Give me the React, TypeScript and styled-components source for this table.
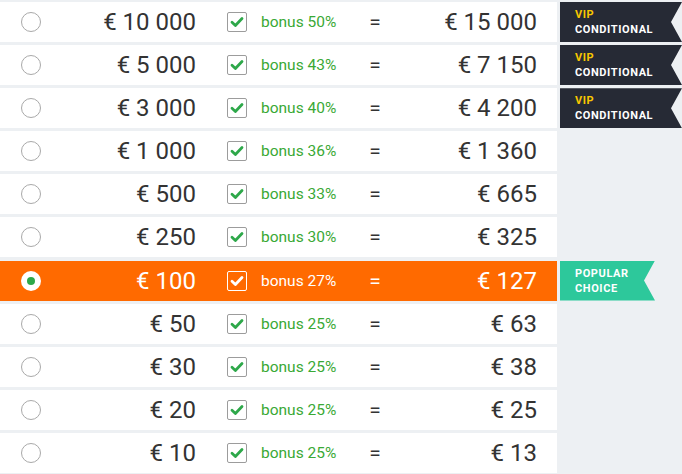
import React from "react";
import styled, { createGlobalStyle } from "styled-components";

const GlobalStyle = createGlobalStyle`
  html, body { margin: 0; padding: 0; background: #edf0f3; }
  body { font-family: Roboto, "Liberation Sans", Arial, sans-serif; }
`;

type Option = { amount: string; bonus: number; total: string; badge?: "vip" | "popular" };

const options: Option[] = [
  { amount: "€ 10 000", bonus: 50, total: "€ 15 000", badge: "vip" },
  { amount: "€ 5 000", bonus: 43, total: "€ 7 150", badge: "vip" },
  { amount: "€ 3 000", bonus: 40, total: "€ 4 200", badge: "vip" },
  { amount: "€ 1 000", bonus: 36, total: "€ 1 360" },
  { amount: "€ 500", bonus: 33, total: "€ 665" },
  { amount: "€ 250", bonus: 30, total: "€ 325" },
  { amount: "€ 100", bonus: 27, total: "€ 127", badge: "popular" },
  { amount: "€ 50", bonus: 25, total: "€ 63" },
  { amount: "€ 30", bonus: 25, total: "€ 38" },
  { amount: "€ 20", bonus: 25, total: "€ 25" },
  { amount: "€ 10", bonus: 25, total: "€ 13" },
];

const Table = styled.div`
  display: grid;
  grid-template-columns: 557px 1fr;
  grid-auto-rows: 40px;
  column-gap: 3px;
  row-gap: 3.1px;
  padding-top: 2px;
  width: 682px;
`;

const Row = styled.div<{ $active: boolean }>`
  grid-column: 1;
  display: flex;
  align-items: center;
  padding-left: 21px;
  background: ${(p) => (p.$active ? "#ff6a00" : "#ffffff")};
  color: ${(p) => (p.$active ? "#ffffff" : "#333333")};
`;

const Radio = styled.span<{ $active: boolean }>`
  flex: 0 0 auto;
  width: 20px;
  height: 20px;
  box-sizing: border-box;
  border-radius: 50%;
  background: #ffffff;
  border: ${(p) => (p.$active ? "none" : "1px solid #a9a9a9")};
  display: flex;
  align-items: center;
  justify-content: center;
  &::after {
    content: "";
    display: ${(p) => (p.$active ? "block" : "none")};
    width: 8px;
    height: 8px;
    border-radius: 50%;
    background: #2ea84a;
  }
`;

const Amount = styled.span`
  flex: 0 0 155px;
  text-align: right;
  font-size: 24px;
  line-height: 1;
`;

const Check = styled.span<{ $active: boolean }>`
  flex: 0 0 auto;
  margin-left: 31px;
  width: 20px;
  height: 20px;
  box-sizing: border-box;
  border-radius: 2px;
  border: 1px solid ${(p) => (p.$active ? "#ffffff" : "#9c9c9c")};
  background: ${(p) => (p.$active ? "transparent" : "#ffffff")};
  color: ${(p) => (p.$active ? "#ffffff" : "#2ea84a")};
  display: flex;
  align-items: center;
  justify-content: center;
  svg { display: block; }
`;

const Bonus = styled.span<{ $active: boolean }>`
  flex: 0 0 100px;
  margin-left: 14px;
  font-size: 15.5px;
  color: ${(p) => (p.$active ? "#ffffff" : "#3aa935")};
`;

const Equals = styled.span`
  flex: 0 0 28px;
  text-align: center;
  font-size: 21px;
`;

const Total = styled.span`
  flex: 0 0 148px;
  text-align: right;
  font-size: 24px;
  line-height: 1;
`;

const Badge = styled.div<{ $kind: "vip" | "popular" }>`
  grid-column: 2;
  display: flex;
  flex-direction: column;
  justify-content: center;
  padding-left: 15px;
  width: ${(p) => (p.$kind === "vip" ? "122px" : "95px")};
  box-sizing: border-box;
  background: ${(p) => (p.$kind === "vip" ? "#262a35" : "#2dc89b")};
  clip-path: polygon(0 0, 100% 0, calc(100% - 11px) 50%, 100% 100%, 0 100%);
  font-size: 11px;
  font-weight: 700;
  letter-spacing: 0.6px;
  line-height: 15px;
  color: #ffffff;
`;

const Vip = styled.span`
  color: #f7c600;
`;

const CheckIcon = () => (
  <svg width="14" height="12" viewBox="0 0 14 12">
    <path d="M2 6.2 L5.4 9.4 L12 2.6" fill="none" stroke="currentColor" strokeWidth="2.8" strokeLinecap="round" strokeLinejoin="round" />
  </svg>
);

export default function App() {
  return (
    <>
      <GlobalStyle />
      <Table>
        {options.map((o, i) => {
          const active = o.badge === "popular";
          return (
            <React.Fragment key={i}>
              <Row $active={active} style={{ gridRow: i + 1 }}>
                <Radio $active={active} />
                <Amount>{o.amount}</Amount>
                <Check $active={active}>
                  <CheckIcon />
                </Check>
                <Bonus $active={active}>bonus {o.bonus}%</Bonus>
                <Equals>=</Equals>
                <Total>{o.total}</Total>
              </Row>
              {o.badge === "vip" && (
                <Badge $kind="vip" style={{ gridRow: i + 1 }}>
                  <Vip>VIP</Vip>
                  <span>CONDITIONAL</span>
                </Badge>
              )}
              {o.badge === "popular" && (
                <Badge $kind="popular" style={{ gridRow: i + 1 }}>
                  <span>POPULAR</span>
                  <span>CHOICE</span>
                </Badge>
              )}
            </React.Fragment>
          );
        })}
      </Table>
    </>
  );
}
